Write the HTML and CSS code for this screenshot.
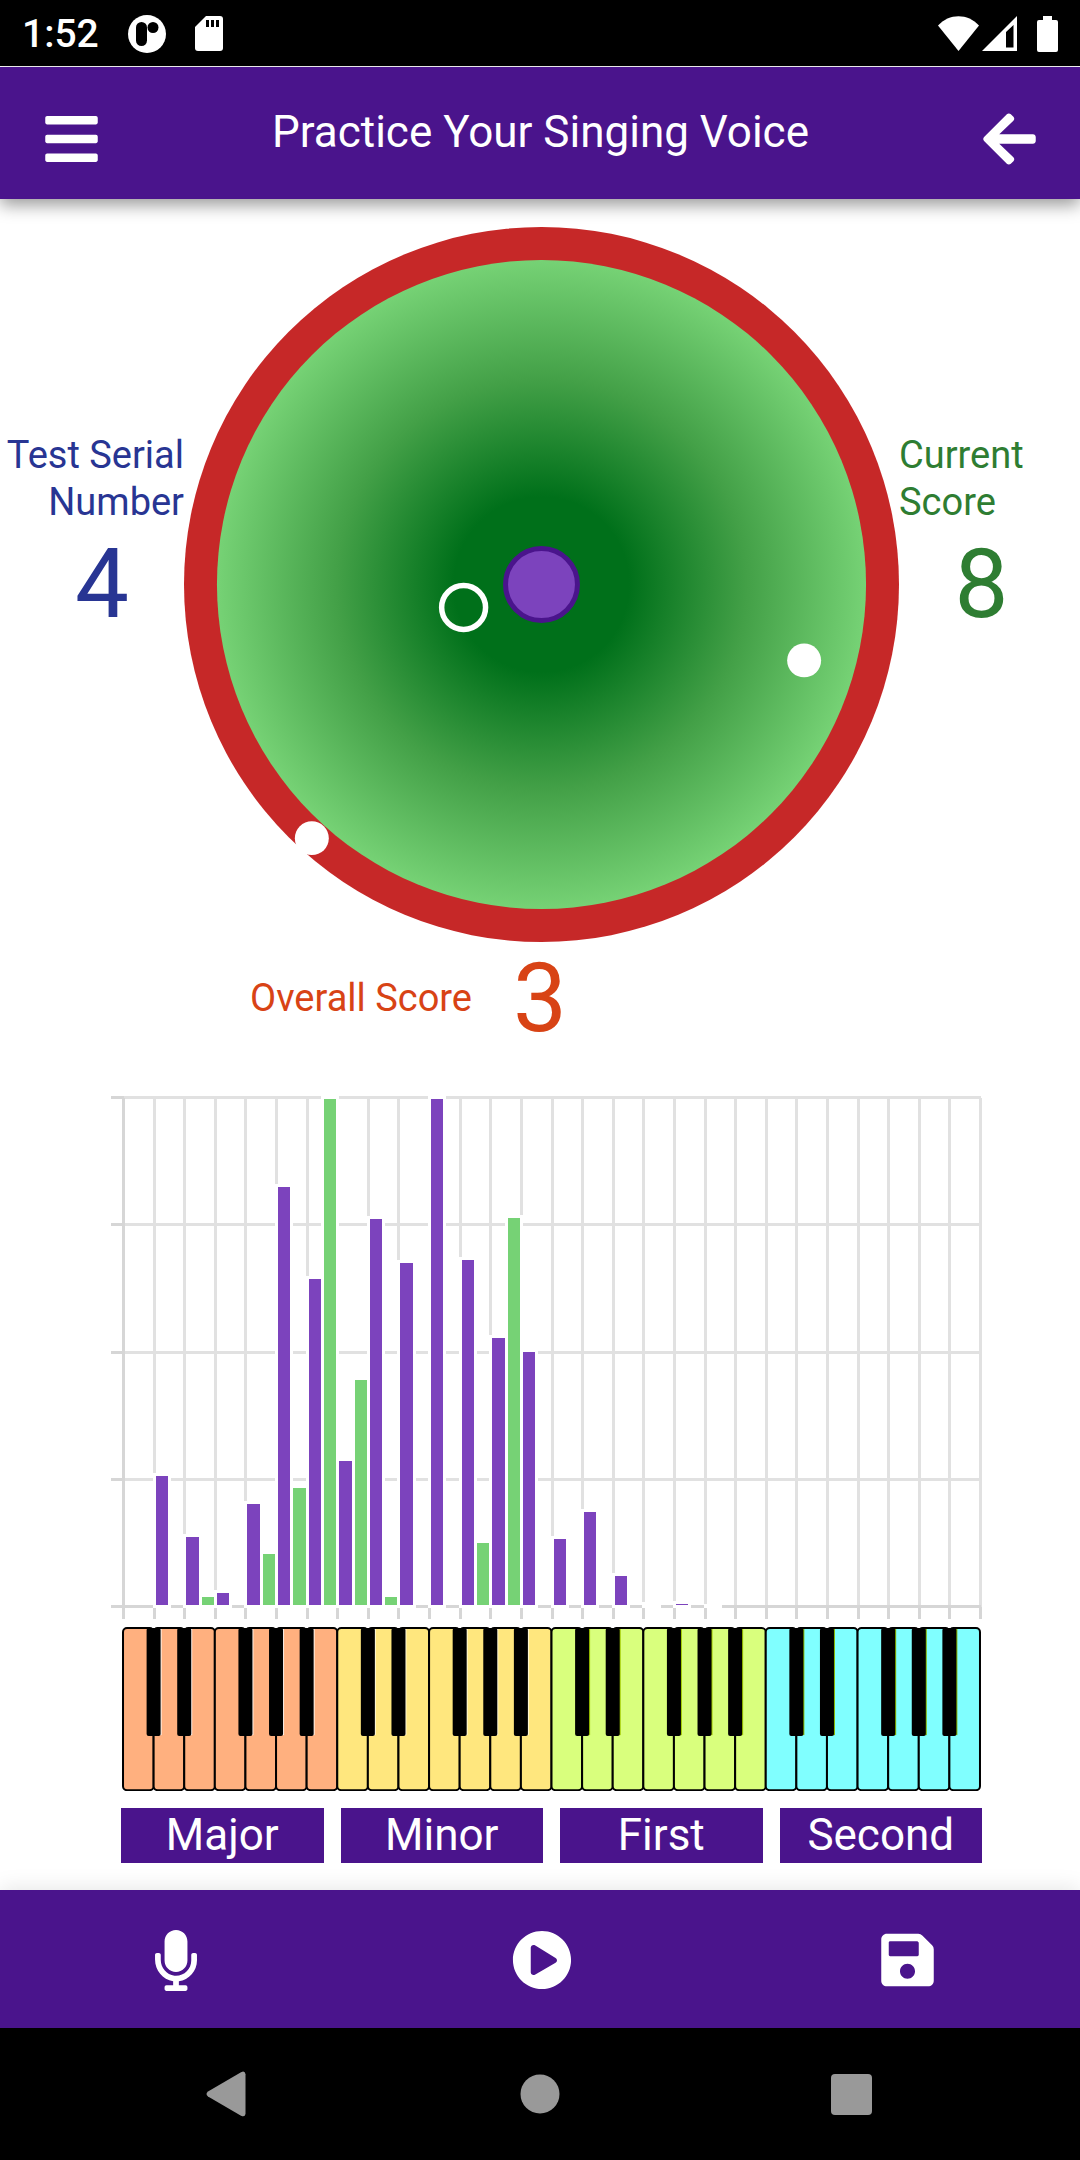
FILE: index.html
```html
<!DOCTYPE html>
<html lang="en">
<head>
  <meta charset="UTF-8">
  <meta name="viewport" content="width=device-width, initial-scale=1.0">
  <title>Practice Your Singing Voice</title>
  <link rel="stylesheet" href="styles.css">
</head>
<body>
  <div class="status-bar">
    <span class="time">1:52</span>
    <svg width="38" height="38" viewBox="0 0 38 38">
      <circle cx="19" cy="19" r="19" fill="#fff"/>
      <rect x="8" y="7" width="11" height="24" rx="5.5"/>
      <circle cx="25" cy="12.5" r="5.5"/>
    </svg>
    <svg width="28" height="36" viewBox="0 0 28 36">
      <path fill="#fff" d="M11 0h14a3 3 0 0 1 3 3v29a3 3 0 0 1-3 3H3a3 3 0 0 1-3-3V11z"/>
      <path d="M11 4h3v7h-3zM16 4h3v7h-3zM21 4h3v7h-3z"/>
    </svg>
    <div class="signals">
      <svg width="41" height="36" viewBox="0 0 41 36">
        <path fill="#fff" d="M20.5 35L0 9.5C11-3 30-3 41 9.5z"/>
      </svg>
      <svg width="35" height="36" viewBox="0 0 35 36">
        <path fill="#fff" fill-rule="evenodd" d="M35 0v35H0zM24 16v15.500h7.500V9z"/>
      </svg>
      <svg class="battery" width="21" height="36" viewBox="0 0 21 36">
        <path fill="#fff" d="M6 0h9v4h4a2 2 0 0 1 2 2v28a2 2 0 0 1-2 2H2a2 2 0 0 1-2-2V6a2 2 0 0 1 2-2h4z"/>
      </svg>
    </div>
  </div>

  <header class="app-header">
    <button class="icon-button" aria-label="Menu">
      <svg width="53" height="60" viewBox="0 0 448 512">
        <path d="M16 132h416c8.837 0 16-7.163 16-16V76c0-8.837-7.163-16-16-16H16C7.163 60 0 67.163 0 76v40c0 8.837 7.163 16 16 16zm0 160h416c8.837 0 16-7.163 16-16v-40c0-8.837-7.163-16-16-16H16c-8.837 0-16 7.163-16 16v40c0 8.837 7.163 16 16 16zm0 160h416c8.837 0 16-7.163 16-16v-40c0-8.837-7.163-16-16-16H16c-8.837 0-16 7.163-16 16v40c0 8.837 7.163 16 16 16z"/>
      </svg>
    </button>
    <h1>Practice Your Singing Voice</h1>
    <button class="icon-button" aria-label="Back">
      <svg width="53" height="60" viewBox="0 0 448 512">
        <path d="M257.5 445.1l-22.2 22.2c-9.4 9.4-24.6 9.4-33.9 0L7 273c-9.4-9.4-9.4-24.6 0-33.9L201.4 44.7c9.4-9.4 24.6-9.4 33.9 0l22.2 22.2c9.5 9.5 9.3 25-.4 34.3L136.6 216H424c13.3 0 24 10.7 24 24v32c0 13.3-10.7 24-24 24H136.6l120.5 114.8c9.8 9.3 10 24.8.4 34.3z"/>
      </svg>
    </button>
  </header>

  <main>
    <section class="scores">
      <div class="score serial">
        <div class="label">Test Serial Number</div>
        <div class="value">4</div>
      </div>
      <svg class="dial" viewBox="0 0 716 716">
        <defs>
          <radialGradient id="pitch">
            <stop offset="0.27" stop-color="#00701a"/>
            <stop offset="0.63" stop-color="#43a047"/>
            <stop offset="1" stop-color="#76d275"/>
          </radialGradient>
        </defs>
        <circle cx="358" cy="358" r="358" fill="#c62828"/>
        <circle cx="358" cy="358" r="325" fill="url(#pitch)"/>
        <circle cx="358" cy="358" r="36" fill="#7c43bd" stroke="#4a148c" stroke-width="5"/>
        <circle cx="280" cy="381" r="22" fill="none" stroke="#fff" stroke-width="5.5"/>
        <circle cx="621" cy="434" r="17" fill="#fff"/>
        <circle cx="128" cy="612" r="17" fill="#fff"/>
      </svg>
      <div class="score current">
        <div class="label">Current Score</div>
        <div class="value">8</div>
      </div>
    </section>

    <section class="overall">
      <div class="label">Overall Score</div>
      <div class="value">3</div>
    </section>

    <section class="notes">
      <svg class="chart" id="chart" viewBox="0 0 871 523"></svg>
      <svg class="piano" id="piano" viewBox="0 0 858 164"></svg>
      <div class="intervals">
        <button>Major</button>
        <button>Minor</button>
        <button>First</button>
        <button>Second</button>
      </div>
    </section>
  </main>

  <footer class="toolbar">
    <button class="icon-button" aria-label="Record">
      <svg width="42" height="61" viewBox="0 0 352 512">
        <path d="M176 352c53.02 0 96-42.98 96-96V96c0-53.02-42.98-96-96-96S80 42.98 80 96v160c0 53.02 42.98 96 96 96zm160-160h-16c-8.84 0-16 7.16-16 16v48c0 74.8-64.49 134.82-140.79 127.38C96.71 376.89 48 317.11 48 250.3V208c0-8.84-7.16-16-16-16H16c-8.84 0-16 7.16-16 16v40.16c0 89.64 63.97 169.55 152 181.69V464H96c-8.84 0-16 7.16-16 16v16c0 8.84 7.16 16 16 16h160c8.84 0 16-7.16 16-16v-16c0-8.84-7.16-16-16-16h-56v-33.77C285.71 418.47 352 344.9 352 256v-48c0-8.84-7.16-16-16-16z"/>
      </svg>
    </button>
    <button class="icon-button" aria-label="Play">
      <svg width="60" height="60" viewBox="0 0 512 512">
        <path d="M256 8C119 8 8 119 8 256s111 248 248 248 248-111 248-248S393 8 256 8zm115.7 272l-176 101c-15.8 8.8-35.7-2.5-35.7-21V152c0-18.4 19.8-29.8 35.7-21l176 107c16.4 9.2 16.4 32.9 0 42z"/>
      </svg>
    </button>
    <button class="icon-button" aria-label="Save">
      <svg width="53" height="60" viewBox="0 0 448 512">
        <path d="M433.941 129.941l-83.882-83.882A48 48 0 0 0 316.118 32H48C21.49 32 0 53.49 0 80v352c0 26.51 21.49 48 48 48h352c26.51 0 48-21.49 48-48V163.882a48 48 0 0 0-14.059-33.941zM224 416c-35.346 0-64-28.654-64-64 0-35.346 28.654-64 64-64s64 28.654 64 64c0 35.346-28.654 64-64 64zm96-304.52V212c0 6.627-5.373 12-12 12H76c-6.627 0-12-5.373-12-12V108c0-6.627 5.373-12 12-12h228.52c3.183 0 6.235 1.264 8.485 3.515l3.48 3.48A11.996 11.996 0 0 1 320 111.48z"/>
      </svg>
    </button>
  </footer>

  <nav class="system-nav">
    <button class="icon-button" aria-label="System back">
      <svg width="46" height="46" viewBox="0 0 46 46">
        <path d="M4 20.5L37 1.200q4-2 4.500 2v39.500q-.5 4-4.500 2L4 25.500q-3-2.500 0-5z"/>
      </svg>
    </button>
    <button class="icon-button" aria-label="Home">
      <svg width="46" height="46" viewBox="0 0 46 46"><circle cx="23" cy="23" r="19.5"/></svg>
    </button>
    <button class="icon-button" aria-label="Recent apps">
      <svg width="46" height="46" viewBox="0 0 46 46"><rect x="1" y="3" width="41" height="41" rx="4"/></svg>
    </button>
  </nav>

  <script>
    // Loudness per note, in percent of the highest
    const sung = [0, 25.9, 13.9, 2.9, 20.4, 82.7, 64.6, 28.8, 76.4, 67.8, 100, 68.3, 53, 50.2, 13.5, 18.8, 6.2, 0.5, 0.8, 0.2];
    const target = [0, 0, 2.1, 0, 10.6, 23.6, 100, 44.8, 2.1, 0, 0, 12.8, 76.6];
    const octaves = [
      { fill: '#ffb07f', edge: '#fff3ea' },
      { fill: '#ffe77e', edge: '#fff8d8' },
      { fill: '#d9ff7d', edge: '#a3cc00' },
      { fill: '#80ffff', edge: '#86b300' }
    ];
    const noteCount = 28;

    function add(parent, name, attrs) {
      const el = document.createElementNS('http://www.w3.org/2000/svg', name);
      for (const key in attrs) {
        el.setAttribute(key, attrs[key]);
      }
      parent.appendChild(el);
    }

    function line(parent, x1, y1, x2, y2, className) {
      add(parent, 'line', { x1, y1, x2, y2, class: className });
    }

    function drawChart() {
      const chart = document.getElementById('chart');
      const left = 12.5, right = 869.5, top = 1.5, bottom = 510.5;
      const step = (right - left) / noteCount;

      for (let i = 0; i <= noteCount; i++) {
        const x = left + i * step;
        line(chart, x, top, x, bottom, 'grid');
        line(chart, x, bottom, x, 523, 'axis');
      }
      for (let i = 0; i <= 4; i++) {
        const y = top + i * (bottom - top) / 4;
        line(chart, left, y, right, y, 'grid');
        line(chart, 0, y, left, y, 'axis');
      }
      line(chart, left, top, left, bottom, 'axis');
      line(chart, left, bottom, right, bottom, 'axis');

      [sung, target].forEach((series, s) => {
        series.forEach((value, i) => {
          if (!value) return;
          const height = value / 100 * (bottom - top);
          add(chart, 'rect', {
            x: left + i * step + s * step / 2,
            y: bottom - height,
            width: step / 2,
            height: height,
            class: s ? 'bar target' : 'bar sung'
          });
        });
      });
    }

    function drawPiano() {
      const piano = document.getElementById('piano');
      const step = 856 / noteCount;

      for (let i = 0; i < noteCount; i++) {
        add(piano, 'rect', {
          x: 1 + i * step, y: 1, width: step, height: 162, rx: 4,
          fill: octaves[Math.floor(i / 7)].fill, class: 'white-key'
        });
      }
      for (let i = 0; i < noteCount; i++) {
        // no black key after the 3rd and 7th of the octave
        if (i % 7 === 2 || i % 7 === 6) continue;
        const x = 1 + (i + 1) * step - 7;
        add(piano, 'rect', { x: x + 10, y: 2, width: 5, height: 106, fill: octaves[Math.floor(i / 7)].edge });
        add(piano, 'rect', { x: x, y: 1, width: 14, height: 108, rx: 2, class: 'black-key' });
      }
    }

    drawChart();
    drawPiano();
  </script>
</body>
</html>
```
FILE: styles.css
```css
* {
  box-sizing: border-box;
}
body {
  font-family: Roboto, sans-serif;
  margin: 0;
  min-height: 100vh;
  display: flex;
  flex-direction: column;
  background-color: white;
}
svg {
  display: block;
}
.status-bar {
  height: 66px;
  padding: 1px 22px 0;
  display: flex;
  align-items: center;
  gap: 29px;
  background-color: black;
  color: white;
}
.time {
  font-size: 39px;
  font-weight: 500;
}
.signals {
  display: flex;
  gap: 3px;
  margin-left: auto;
}
.battery {
  margin-left: 17px;
}
.app-header {
  height: 132px;
  margin-top: 1px;
  padding: 0 44px 0 45px;
  display: flex;
  align-items: center;
  justify-content: space-between;
  background-color: #4a148c;
  color: white;
  box-shadow: 0 6px 16px rgba(0,0,0,0.4);
}
.app-header h1 {
  margin: 0;
  padding-bottom: 2px;
  font-size: 44px;
  font-weight: 400;
}
.icon-button {
  padding: 0;
  border: none;
  background: none;
  cursor: pointer;
}
.icon-button svg {
  fill: white;
}
.app-header .icon-button {
  padding-top: 12px;
}
main {
  flex: 1;
  padding-top: 28px;
}
.scores {
  display: grid;
  grid-template-columns: 184fr 715fr 181fr;
}
.dial {
  width: 100%;
}
.score {
  padding-top: 19vw;
}
.label {
  font-size: 38px;
  line-height: 47px;
}
.value {
  font-size: 96px;
  line-height: 113px;
  text-align: center;
}
.score .value {
  padding-top: 2px;
}
.serial {
  color: #283593;
}
.serial .label {
  text-align: right;
}
.serial .value {
  padding-left: 20px;
}
.current {
  color: #2e7d32;
}
.current .value {
  padding-right: 16px;
}
.overall {
  display: grid;
  grid-template-columns: 1fr auto 1fr;
  align-items: center;
  gap: 41px;
  color: #d84315;
}
.overall .label {
  text-align: right;
}
.notes {
  padding: 41px 98px 27px 111px;
}
.chart {
  width: 100%;
  shape-rendering: crispEdges;
}
.grid {
  stroke: #e1e1e1;
  stroke-width: 3;
}
.axis {
  stroke: #d6d6d6;
  stroke-width: 3;
}
.bar {
  stroke: white;
  stroke-width: 3;
}
.sung {
  fill: #7c43bd;
}
.target {
  fill: #76d275;
}
.piano {
  width: 100%;
  padding: 0 1px 0 11px;
  margin-top: 8px;
}
.white-key {
  stroke: black;
  stroke-width: 2;
}
.intervals {
  display: grid;
  grid-template-columns: repeat(4, 1fr);
  gap: 17px;
  margin-top: 17px;
  padding-left: 10px;
}
.intervals button {
  height: 55px;
  padding: 0 0 2px;
  border: none;
  background-color: #4a148c;
  color: white;
  font-family: inherit;
  font-size: 44px;
  line-height: 52px;
  cursor: pointer;
}
.toolbar {
  height: 138px;
  padding: 2px 143px 0 146px;
  display: flex;
  align-items: center;
  justify-content: space-between;
  background-color: #4a148c;
  box-shadow: 0 -2px 20px rgba(0,0,0,0.1);
}
.toolbar .icon-button {
  width: 60px;
}
.toolbar svg {
  margin: 0 auto;
}
.system-nav {
  height: 132px;
  padding: 0 70px;
  display: grid;
  grid-template-columns: repeat(3, 1fr);
  align-items: center;
  justify-items: center;
  background-color: black;
}
.system-nav svg {
  fill: #999;
}
```
